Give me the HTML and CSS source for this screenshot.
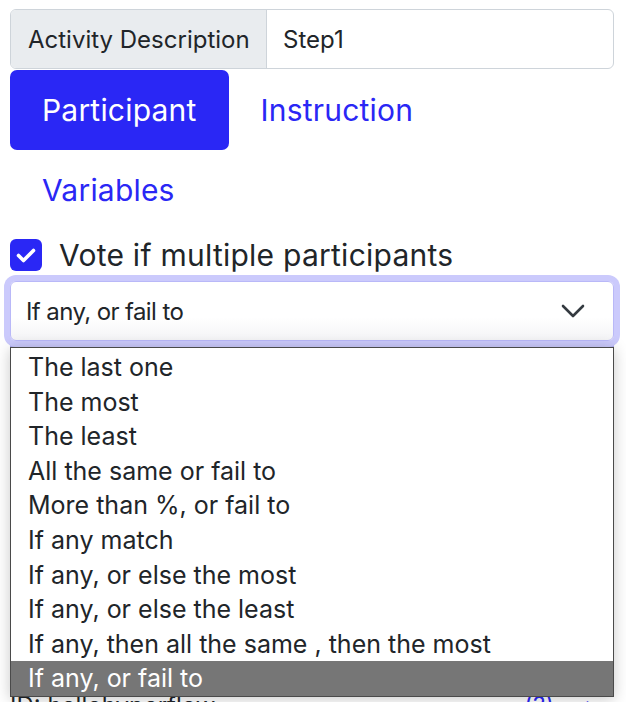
FILE: index.html
```html
<!DOCTYPE html>
<html>
<head>
<meta charset="utf-8">
<link rel="stylesheet" href="styles.css">
</head>
<body>
<div class="page">
  <div class="input-group">
    <span class="ig-label">Activity Description</span>
    <span class="ig-input">Step1</span>
  </div>
  <nav class="pills">
    <a class="pill active">Participant</a>
    <a class="pill">Instruction</a>
    <a class="pill">Variables</a>
  </nav>
  <label class="check-row">
    <span class="check">
      <svg viewBox="0 0 32 32" width="32" height="32"><path d="M8.5 16.5l5 5l10-10" fill="none" stroke="#fff" stroke-width="3.6" stroke-linecap="round" stroke-linejoin="round"/></svg>
    </span>
    <span class="check-text">Vote if multiple participants</span>
  </label>
  <div class="select-wrap">
    <div class="select">
      <span>If any, or fail to</span>
      <svg class="chev" viewBox="0 0 24 14" width="24" height="14"><path d="M2 2l10 10l10-10" fill="none" stroke="#343a40" stroke-width="2.6" stroke-linecap="round" stroke-linejoin="round"/></svg>
    </div>
    <div class="under-strip">
      <span class="c1"></span><span class="c2"></span><span class="c3"></span><span class="c4"></span>
    </div>
    <ul class="dropdown">
      <li>The last one</li>
      <li>The most</li>
      <li>The least</li>
      <li>All the same or fail to</li>
      <li>More than %, or fail to</li>
      <li>If any match</li>
      <li>If any, or else the most</li>
      <li>If any, or else the least</li>
      <li>If any, then all the same , then the most</li>
      <li class="selected">If any, or fail to</li>
    </ul>
  </div>
  <div class="below">
    <span class="id-text">ID: hellohyperflow</span>
    <span class="icons"><span class="ic">(?)</span><span class="ic">&gt;</span></span>
  </div>
</div>
</body>
</html>
```

FILE: styles.css
```css
html, body {
  margin: 0;
  padding: 0;
  background: #fff;
  overflow: hidden;
}
.page {
  width: 604px;
  padding: 9px 0 0 10px;
  font-family: Inter, "Liberation Sans", sans-serif;
  color: #212529;
}
.input-group {
  display: flex;
  height: 60px;
  box-sizing: border-box;
  border: 1.5px solid #ced4da;
  border-radius: 6px;
  overflow: hidden;
}
.ig-label {
  display: flex;
  align-items: center;
  width: 256px;
  box-sizing: border-box;
  padding-left: 17px;
  background: #e9ecef;
  border-right: 1.5px solid #ced4da;
  font-size: 24px;
}
.ig-input {
  display: flex;
  align-items: center;
  padding-left: 16px;
  font-size: 24px;
}
.pills {
  display: flex;
  flex-wrap: wrap;
  max-width: 540px;
  margin-top: 1px;
}
.pill {
  display: block;
  padding: 22px 32px;
  line-height: 36px;
  font-size: 30px;
  letter-spacing: 0.2px;
  color: #2a27f5;
  border-radius: 7px;
}
.pill.active {
  background: #2a27f5;
  color: #fff;
}
.check-row {
  display: flex;
  align-items: center;
  gap: 17px;
  margin-top: 8px;
  height: 34px;
}
.check {
  width: 32px;
  height: 32px;
  border-radius: 6px;
  background: #2a27f5;
  display: flex;
  align-items: center;
  justify-content: center;
}
.check svg {
  display: block;
}
.check-text {
  font-size: 30px;
  letter-spacing: 0.25px;
}
.select-wrap {
  position: relative;
  margin-top: 9px;
}
.select {
  position: relative;
  z-index: 2;
  height: 60px;
  box-sizing: border-box;
  border: 1.5px solid #b9b8f8;
  border-radius: 6px;
  box-shadow: 0 0 0 6px #cbcafc;
  background: linear-gradient(#fff 60%, #f4f4f6);
  display: flex;
  align-items: center;
  justify-content: space-between;
  padding: 0 28px 0 15px;
  font-size: 24px;
  letter-spacing: -0.6px;
}
.chev {
  display: block;
}
.under-strip {
  display: flex;
  height: 8px;
}
.under-strip span {
  background: #a9a8ee;
  border-right: 1px solid #8e8dd8;
}
.under-strip .c1 { width: 65px; }
.under-strip .c2 { width: 227px; }
.under-strip .c3 { width: 100px; }
.under-strip .c4 { flex: 1; border-right: none; }
.dropdown {
  position: absolute;
  z-index: 3;
  top: 66px;
  left: 0;
  width: 604px;
  box-sizing: border-box;
  margin: 0;
  padding: 2px 0 0;
  list-style: none;
  background: #fff;
  border: 1px solid #4a4a4a;
  box-shadow: 0 2px 14px rgba(0, 0, 0, 0.22);
  font-size: 25px;
}
.dropdown li {
  height: 34.6px;
  line-height: 34.6px;
  padding-left: 17px;
}
.dropdown li.selected {
  background: #767676;
  color: #fff;
}
.below {
  display: flex;
  justify-content: space-between;
  margin-top: 342px;
  font-size: 24px;
}
.icons {
  display: flex;
  gap: 30px;
  color: #2a27f5;
  padding-right: 14px;
}
```
